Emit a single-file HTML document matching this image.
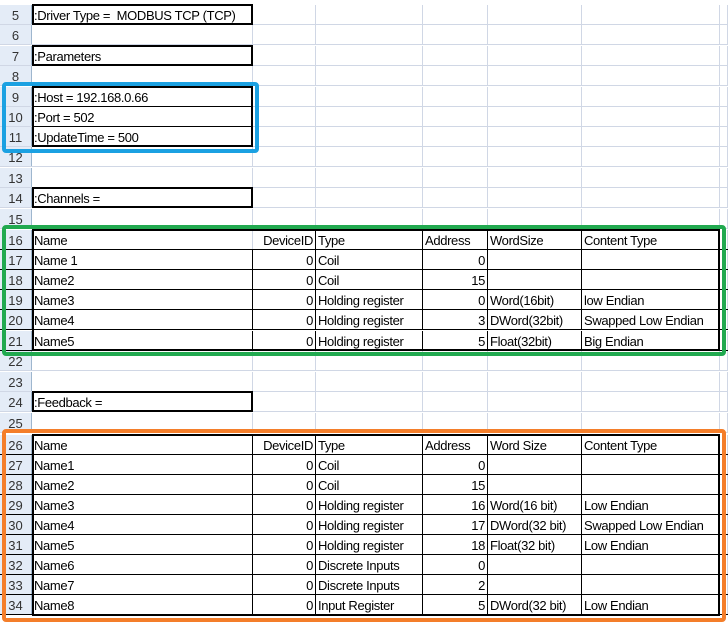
<!DOCTYPE html><html><head><style>
body{margin:0;width:728px;height:624px;background:#fff;position:relative;overflow:hidden;font-family:"Liberation Sans",sans-serif;font-size:13px;color:#000;letter-spacing:-0.35px}
.r{position:absolute;left:0;width:728px;display:flex;height:20px;box-sizing:border-box;border-bottom:1px solid #d0d7e5}
.r>div{box-sizing:border-box;border-right:1px solid #d0d7e5;height:100%;line-height:21px;padding:0 2px;white-space:nowrap;overflow:visible}
.r>.h{width:32px;background:#e4ecf7;border-right:1px solid #9eb6ce;text-align:center;color:#333;font-size:13px;letter-spacing:0}
.a{width:221px}.b{width:63px;text-align:right}.c{width:107px}.d{width:65px;text-align:right}.e{width:94px}.f{width:138px}.g{flex:1}
.box{position:absolute;border:2px solid #000;box-sizing:border-box}
.t{position:absolute;border:1px solid #000;box-sizing:border-box}
.hl{position:absolute;border-radius:4px;box-sizing:border-box}
</style></head><body>
<div class="r" style="top:5px"><div class="h">5</div><div class="a">:Driver Type =&nbsp; MODBUS TCP (TCP)</div><div class="b"></div><div class="c"></div><div class="d"></div><div class="e"></div><div class="f"></div><div class="g"></div></div>
<div class="r" style="top:25px"><div class="h">6</div><div class="a"></div><div class="b"></div><div class="c"></div><div class="d"></div><div class="e"></div><div class="f"></div><div class="g"></div></div>
<div class="r" style="top:46px"><div class="h">7</div><div class="a">:Parameters</div><div class="b"></div><div class="c"></div><div class="d"></div><div class="e"></div><div class="f"></div><div class="g"></div></div>
<div class="r" style="top:66px"><div class="h">8</div><div class="a"></div><div class="b"></div><div class="c"></div><div class="d"></div><div class="e"></div><div class="f"></div><div class="g"></div></div>
<div class="r" style="top:87px"><div class="h">9</div><div class="a">:Host = 192.168.0.66</div><div class="b"></div><div class="c"></div><div class="d"></div><div class="e"></div><div class="f"></div><div class="g"></div></div>
<div class="r" style="top:107px"><div class="h">10</div><div class="a">:Port = 502</div><div class="b"></div><div class="c"></div><div class="d"></div><div class="e"></div><div class="f"></div><div class="g"></div></div>
<div class="r" style="top:127px"><div class="h">11</div><div class="a">:UpdateTime = 500</div><div class="b"></div><div class="c"></div><div class="d"></div><div class="e"></div><div class="f"></div><div class="g"></div></div>
<div class="r" style="top:147px"><div class="h">12</div><div class="a"></div><div class="b"></div><div class="c"></div><div class="d"></div><div class="e"></div><div class="f"></div><div class="g"></div></div>
<div class="r" style="top:168px"><div class="h">13</div><div class="a"></div><div class="b"></div><div class="c"></div><div class="d"></div><div class="e"></div><div class="f"></div><div class="g"></div></div>
<div class="r" style="top:188px"><div class="h">14</div><div class="a">:Channels =</div><div class="b"></div><div class="c"></div><div class="d"></div><div class="e"></div><div class="f"></div><div class="g"></div></div>
<div class="r" style="top:209px"><div class="h">15</div><div class="a"></div><div class="b"></div><div class="c"></div><div class="d"></div><div class="e"></div><div class="f"></div><div class="g"></div></div>
<div class="r" style="top:230px;border-bottom-color:#000"><div class="h">16</div><div class="a">Name</div><div class="b" style="border-color:#000">DeviceID</div><div class="c" style="border-color:#000">Type</div><div class="d" style="text-align:left;border-color:#000">Address</div><div class="e" style="border-color:#000">WordSize</div><div class="f">Content Type</div><div class="g"></div></div>
<div class="r" style="top:250px;border-bottom-color:#000"><div class="h">17</div><div class="a" style="border-color:#000">Name 1</div><div class="b" style="border-color:#000">0</div><div class="c" style="border-color:#000">Coil</div><div class="d" style="border-color:#000">0</div><div class="e" style="border-color:#000"></div><div class="f"></div><div class="g"></div></div>
<div class="r" style="top:270px;border-bottom-color:#000"><div class="h">18</div><div class="a" style="border-color:#000">Name2</div><div class="b" style="border-color:#000">0</div><div class="c" style="border-color:#000">Coil</div><div class="d" style="border-color:#000">15</div><div class="e" style="border-color:#000"></div><div class="f"></div><div class="g"></div></div>
<div class="r" style="top:290px;border-bottom-color:#000"><div class="h">19</div><div class="a" style="border-color:#000">Name3</div><div class="b" style="border-color:#000">0</div><div class="c" style="border-color:#000">Holding register</div><div class="d" style="border-color:#000">0</div><div class="e" style="border-color:#000">Word(16bit)</div><div class="f">low Endian</div><div class="g"></div></div>
<div class="r" style="top:310px;border-bottom-color:#000"><div class="h">20</div><div class="a" style="border-color:#000">Name4</div><div class="b" style="border-color:#000">0</div><div class="c" style="border-color:#000">Holding register</div><div class="d" style="border-color:#000">3</div><div class="e" style="border-color:#000">DWord(32bit)</div><div class="f">Swapped Low Endian</div><div class="g"></div></div>
<div class="r" style="top:331px;border-bottom-color:#000"><div class="h">21</div><div class="a" style="border-color:#000">Name5</div><div class="b" style="border-color:#000">0</div><div class="c" style="border-color:#000">Holding register</div><div class="d" style="border-color:#000">5</div><div class="e" style="border-color:#000">Float(32bit)</div><div class="f">Big Endian</div><div class="g"></div></div>
<div class="r" style="top:351px"><div class="h">22</div><div class="a"></div><div class="b"></div><div class="c"></div><div class="d"></div><div class="e"></div><div class="f"></div><div class="g"></div></div>
<div class="r" style="top:372px"><div class="h">23</div><div class="a"></div><div class="b"></div><div class="c"></div><div class="d"></div><div class="e"></div><div class="f"></div><div class="g"></div></div>
<div class="r" style="top:392px"><div class="h">24</div><div class="a">:Feedback =</div><div class="b"></div><div class="c"></div><div class="d"></div><div class="e"></div><div class="f"></div><div class="g"></div></div>
<div class="r" style="top:413px"><div class="h">25</div><div class="a"></div><div class="b"></div><div class="c"></div><div class="d"></div><div class="e"></div><div class="f"></div><div class="g"></div></div>
<div class="r" style="top:435px;border-bottom-color:#000"><div class="h">26</div><div class="a" style="border-color:#000">Name</div><div class="b" style="border-color:#000">DeviceID</div><div class="c" style="border-color:#000">Type</div><div class="d" style="text-align:left;border-color:#000">Address</div><div class="e" style="border-color:#000">Word Size</div><div class="f">Content Type</div><div class="g"></div></div>
<div class="r" style="top:455px;border-bottom-color:#000"><div class="h">27</div><div class="a" style="border-color:#000">Name1</div><div class="b" style="border-color:#000">0</div><div class="c" style="border-color:#000">Coil</div><div class="d" style="border-color:#000">0</div><div class="e" style="border-color:#000"></div><div class="f"></div><div class="g"></div></div>
<div class="r" style="top:475px;border-bottom-color:#000"><div class="h">28</div><div class="a" style="border-color:#000">Name2</div><div class="b" style="border-color:#000">0</div><div class="c" style="border-color:#000">Coil</div><div class="d" style="border-color:#000">15</div><div class="e" style="border-color:#000"></div><div class="f"></div><div class="g"></div></div>
<div class="r" style="top:495px;border-bottom-color:#000"><div class="h">29</div><div class="a" style="border-color:#000">Name3</div><div class="b" style="border-color:#000">0</div><div class="c" style="border-color:#000">Holding register</div><div class="d" style="border-color:#000">16</div><div class="e" style="border-color:#000">Word(16 bit)</div><div class="f">Low Endian</div><div class="g"></div></div>
<div class="r" style="top:515px;border-bottom-color:#000"><div class="h">30</div><div class="a" style="border-color:#000">Name4</div><div class="b" style="border-color:#000">0</div><div class="c" style="border-color:#000">Holding register</div><div class="d" style="border-color:#000">17</div><div class="e" style="border-color:#000">DWord(32 bit)</div><div class="f">Swapped Low Endian</div><div class="g"></div></div>
<div class="r" style="top:535px;border-bottom-color:#000"><div class="h">31</div><div class="a" style="border-color:#000">Name5</div><div class="b" style="border-color:#000">0</div><div class="c" style="border-color:#000">Holding register</div><div class="d" style="border-color:#000">18</div><div class="e" style="border-color:#000">Float(32 bit)</div><div class="f">Low Endian</div><div class="g"></div></div>
<div class="r" style="top:555px;border-bottom-color:#000"><div class="h">32</div><div class="a" style="border-color:#000">Name6</div><div class="b" style="border-color:#000">0</div><div class="c" style="border-color:#000">Discrete Inputs</div><div class="d" style="border-color:#000">0</div><div class="e" style="border-color:#000"></div><div class="f"></div><div class="g"></div></div>
<div class="r" style="top:575px;border-bottom-color:#000"><div class="h">33</div><div class="a" style="border-color:#000">Name7</div><div class="b" style="border-color:#000">0</div><div class="c" style="border-color:#000">Discrete Inputs</div><div class="d" style="border-color:#000">2</div><div class="e" style="border-color:#000"></div><div class="f"></div><div class="g"></div></div>
<div class="r" style="top:595px;border-bottom-color:#000"><div class="h">34</div><div class="a" style="border-color:#000">Name8</div><div class="b" style="border-color:#000">0</div><div class="c" style="border-color:#000">Input Register</div><div class="d" style="border-color:#000">5</div><div class="e" style="border-color:#000">DWord(32 bit)</div><div class="f">Low Endian</div><div class="g"></div></div>

<div class="box" style="left:32px;top:4px;width:221px;height:21px"></div>
<div class="box" style="left:32px;top:45px;width:221px;height:21px"></div>
<div class="box" style="left:32px;top:187px;width:221px;height:21px"></div>
<div class="box" style="left:32px;top:391px;width:221px;height:21px"></div>
<div class="box" style="left:32px;top:86px;width:221px;height:61px"></div>
<div class="t" style="left:32px;top:106px;width:221px;height:1px;border-width:1px 0 0 0"></div>
<div class="t" style="left:32px;top:126px;width:221px;height:1px;border-width:1px 0 0 0"></div>
<div class="box" style="left:32px;top:229px;width:688px;height:122px"></div>
<div class="box" style="left:32px;top:434px;width:688px;height:182px"></div>

<div class="hl" style="left:2px;top:82px;width:257px;height:71px;border:4px solid #1ba1e2"></div>
<div class="hl" style="left:2px;top:225px;width:724px;height:131px;border:4px solid #21a94f"></div>
<div class="hl" style="left:2px;top:429px;width:724px;height:193px;border:4px solid #f47e2a"></div>
</body></html>
